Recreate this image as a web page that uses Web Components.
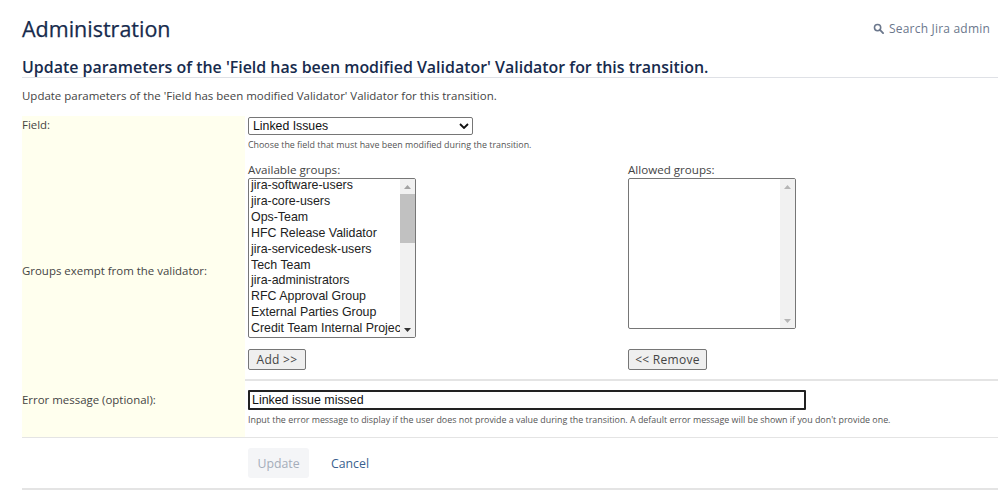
<!DOCTYPE html>
<html lang="en">
<head>
<meta charset="utf-8">
<title>Administration</title>
<style>
  html, body { margin: 0; height: 492px; overflow: hidden; background: #fff; }
  body { font-family: "Open Sans", "Noto Sans", sans-serif; color: #333; }
</style>
</head>
<body>
<admin-page>
  <admin-header></admin-header>
  <form-heading title-text="Update parameters of the 'Field has been modified Validator' Validator for this transition."></form-heading>

  <form-row label="Field:" style="--row-h:44px">
    <drop-down value="Linked Issues"></drop-down>
    <field-hint style="--hint-top:4px">Choose the field that must have been modified during the transition.</field-hint>
  </form-row>

  <form-row label="Groups exempt from the validator:" center style="--row-h:221px" ruled>
    <group-pickers></group-pickers>
  </form-row>

  <form-row label="Error message (optional):" style="--row-h:56px;--pad-top:9px;--label-top:11px">
    <text-box value="Linked issue missed"></text-box>
    <field-hint style="--hint-top:4px">Input the error message to display if the user does not provide a value during the transition. A default error message will be shown if you don't provide one.</field-hint>
  </form-row>

  <form-actions></form-actions>
</admin-page>

<script>
// ---- page shell
class AdminPage extends HTMLElement {
  constructor() {
    super();
    this.attachShadow({ mode: 'open' }).innerHTML = `
      <style>
        :host { display: block; padding-left: 22px; }
      </style>
      <slot></slot>`;
  }
}

class AdminHeader extends HTMLElement {
  constructor() {
    super();
    this.attachShadow({ mode: 'open' }).innerHTML = `
      <style>
        :host { display: flex; align-items: center; justify-content: space-between; height: 56px; }
        h1 { margin: 0; font-size: 21.5px; font-weight: 400; color: #172b4d; -webkit-text-stroke: .25px #172b4d; }
        .search { display: flex; align-items: center; gap: 5px; font-size: 12px; color: #6b778c; padding-right: 8px; letter-spacing: .2px; }
        svg { width: 11px; height: 11px; display: block; }
      </style>
      <h1>Administration</h1>
      <div class="search">
        <svg viewBox="0 0 12 12"><circle cx="5" cy="5" r="3.4" fill="none" stroke="#6b778c" stroke-width="1.7"/><path d="M7.6 7.6 11 11" stroke="#6b778c" stroke-width="2" stroke-linecap="round"/></svg>
        <span>Search Jira admin</span>
      </div>`;
  }
}

class FormHeading extends HTMLElement {
  constructor() {
    super();
    const text = this.getAttribute('title-text');
    this.attachShadow({ mode: 'open' }).innerHTML = `
      <style>
        :host { display: block; }
        h2 { margin: 0; box-sizing: border-box; height: 22px; padding-top: 1px; line-height: 20px; font-size: 15.95px; font-weight: 600; color: #172b4d; border-bottom: 1px solid #dfe1e6; white-space: nowrap; }
        p { margin: 0; height: 38px; line-height: 36px; font-size: 11.47px; color: #444; }
      </style>
      <h2>${text}</h2>
      <p>${text}</p>`;
  }
}

// ---- form rows: pale yellow label column + value column
class FormRow extends HTMLElement {
  constructor() {
    super();
    const label = this.getAttribute('label');
    this.attachShadow({ mode: 'open' }).innerHTML = `
      <style>
        :host { display: grid; grid-template-columns: 223px 1fr; height: var(--row-h); }
        :host([ruled]) .value { border-bottom: 2px solid #e4e4e4; }
        .label { background: #ffffee; font-size: 11.45px; color: #444; padding-top: var(--label-top, 1px); box-sizing: border-box; }
        :host([center]) .label { display: flex; align-items: center; padding-top: 0; }
        .value { padding: var(--pad-top, 0) 0 0 3px; box-sizing: border-box; min-width: 0; }
      </style>
      <div class="label">${label}</div>
      <div class="value"><slot></slot></div>`;
  }
}

class FieldHint extends HTMLElement {
  constructor() {
    super();
    this.attachShadow({ mode: 'open' }).innerHTML = `
      <style>
        :host { display: block; font-size: 8.9px; line-height: 12px; color: #555; margin-top: var(--hint-top, 0); white-space: nowrap; }
      </style>
      <slot></slot>`;
  }
}

// ---- controls
class DropDown extends HTMLElement {
  constructor() {
    super();
    this.attachShadow({ mode: 'open' }).innerHTML = `
      <style>
        :host { display: flex; align-items: center; justify-content: space-between; box-sizing: border-box; width: 225px; height: 18px; margin-top: 1px;
          border: 1px solid #767676; border-radius: 2px; background: #fff; padding: 0 3px 0 4px;
          font: 12.3px "Liberation Sans", Arial, sans-serif; color: #111; }
        svg { width: 10px; height: 6px; display: block; }
      </style>
      <span>${this.getAttribute('value')}</span>
      <svg viewBox="0 0 10 6"><path d="M1 1l4 4 4-4" fill="none" stroke="#111" stroke-width="1.8"/></svg>`;
  }
}

class TextBox extends HTMLElement {
  constructor() {
    super();
    this.attachShadow({ mode: 'open' }).innerHTML = `
      <style>
        :host { display: block; box-sizing: border-box; width: 558px; height: 20px; border: 2px solid #222; border-radius: 1px;
          padding-left: 2px; font: 12.4px/16px "Liberation Sans", Arial, sans-serif; color: #111; background: #fff; }
      </style>
      ${this.getAttribute('value')}`;
  }
}

class ListBox extends HTMLElement {
  constructor() {
    super();
    this.attachShadow({ mode: 'open' }).innerHTML = `
      <style>
        :host { display: flex; box-sizing: border-box; width: 168px; height: var(--list-h); border: 1px solid #767676; border-radius: 2px; background: #fff; overflow: hidden;
          font: 12.4px/15.9px "Liberation Sans", Arial, sans-serif; color: #222; }
        .items { flex: 1; min-width: 0; margin-top: -1px; padding: 0 0 0 2px; overflow: hidden; white-space: nowrap; }
        .bar { flex: none; width: 15px; background: #f1f1f1; display: flex; flex-direction: column; position: relative; }
        .arrow { flex: none; height: 15px; display: flex; align-items: center; justify-content: center; }
        .track { flex: 1; min-height: 0; }
        .thumb { height: 49px; background: #c1c1c1; }
        svg { width: 7px; height: 4px; display: block; }
      </style>
      <div class="items"><slot></slot></div>
      <div class="bar">
        <div class="arrow"><svg viewBox="0 0 7 4"><path d="M0 4 3.5 0 7 4z" fill="var(--arrow, #a3a3a3)"/></svg></div>
        <div class="track"><div class="thumb" style="display:var(--thumb, block)"></div></div>
        <div class="arrow"><svg viewBox="0 0 7 4"><path d="M0 0 3.5 4 7 0z" fill="var(--arrow-down, #a3a3a3)"/></svg></div>
      </div>`;
  }
}

class PlainButton extends HTMLElement {
  constructor() {
    super();
    this.attachShadow({ mode: 'open' }).innerHTML = `
      <style>
        :host { display: inline-flex; align-items: center; justify-content: center; box-sizing: border-box; height: 21px; padding: 0 6px;
          border: 1px solid #767676; border-radius: 2px; background: #efefef; font: 12px "Open Sans", sans-serif; color: #444; letter-spacing: .3px; }
      </style>
      <slot></slot>`;
  }
}

class GroupPickers extends HTMLElement {
  constructor() {
    super();
    const groups = ['jira-software-users', 'jira-core-users', 'Ops-Team', 'HFC Release Validator', 'jira-servicedesk-users',
      'Tech Team', 'jira-administrators', 'RFC Approval Group', 'External Parties Group', 'Credit Team Internal Projects'];
    this.attachShadow({ mode: 'open' }).innerHTML = `
      <style>
        :host { display: grid; grid-template-columns: 380px 168px; padding-top: 2px; }
        .col { display: flex; flex-direction: column; align-items: flex-start; }
        .cap { font-size: 11.6px; line-height: 16px; color: #444; }
        list-box { --list-h: 160px; --arrow-down: #333; margin-bottom: 11px; }
        .empty { --list-h: 151px; --thumb: none; --arrow: #b5b5b5; --arrow-down: #b5b5b5; margin-bottom: 20px; }
      </style>
      <div class="col">
        <div class="cap">Available groups:</div>
        <list-box>${groups.map(g => `<div>${g}</div>`).join('')}</list-box>
        <plain-button style="width:58px">Add &gt;&gt;</plain-button>
      </div>
      <div class="col">
        <div class="cap">Allowed groups:</div>
        <list-box class="empty"></list-box>
        <plain-button style="width:79px">&lt;&lt; Remove</plain-button>
      </div>`;
  }
}

class FormActions extends HTMLElement {
  constructor() {
    super();
    this.attachShadow({ mode: 'open' }).innerHTML = `
      <style>
        :host { display: flex; align-items: center; height: 53px; box-sizing: border-box; padding-left: 226px;
          border-top: 1px solid #e4e4e4; border-bottom: 2px solid #e4e4e4; gap: 22px; font-size: 12.3px; }
        .update { width: 61px; height: 30px; display: flex; align-items: center; justify-content: center; background: #f4f5f7; border-radius: 3px; color: #a5adba; }
        .cancel { color: #3b5f8f; }
      </style>
      <div class="update">Update</div>
      <div class="cancel">Cancel</div>`;
  }
}

customElements.define('admin-page', AdminPage);
customElements.define('admin-header', AdminHeader);
customElements.define('form-heading', FormHeading);
customElements.define('form-row', FormRow);
customElements.define('field-hint', FieldHint);
customElements.define('drop-down', DropDown);
customElements.define('text-box', TextBox);
customElements.define('list-box', ListBox);
customElements.define('plain-button', PlainButton);
customElements.define('group-pickers', GroupPickers);
customElements.define('form-actions', FormActions);
</script>
</body>
</html>
